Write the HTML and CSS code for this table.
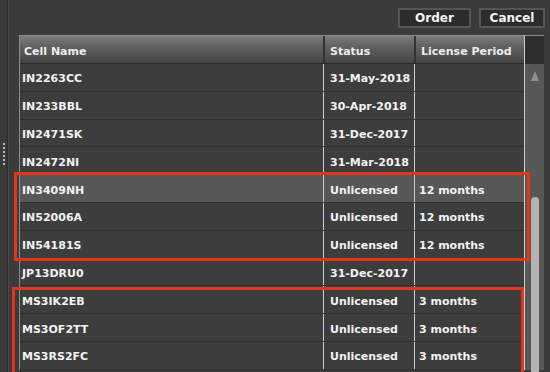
FILE: index.html
```html
<!DOCTYPE html>
<html lang="en">
<head>
  <meta charset="UTF-8" />
  <title>Cell Licenses</title>
  <meta name="viewport" content="width=device-width, initial-scale=1.0" />
  <link rel="stylesheet" href="styles.css">
</head>
<body>
  <div class="shell">
    <div class="splitter">
      <div class="grip">
        <span></span><span></span><span></span><span></span><span></span><span></span>
      </div>
    </div>

    <div class="panel">
      <div class="toolbar">
        <button class="btn btn-order">Order</button>
        <button class="btn btn-cancel">Cancel</button>
      </div>

      <div class="grid-wrap">
        <div class="cells">
          <div class="row head">
            <div class="c1">Cell Name</div>
            <div class="c2">Status</div>
            <div class="c3">License Period</div>
          </div>
          <div class="row"><div class="c1">IN2263CC</div><div class="c2">31-May-2018</div><div class="c3"></div></div>
          <div class="row"><div class="c1">IN233BBL</div><div class="c2">30-Apr-2018</div><div class="c3"></div></div>
          <div class="row"><div class="c1">IN2471SK</div><div class="c2">31-Dec-2017</div><div class="c3"></div></div>
          <div class="row"><div class="c1">IN2472NI</div><div class="c2">31-Mar-2018</div><div class="c3"></div></div>
          <div class="row selected"><div class="c1">IN3409NH</div><div class="c2">Unlicensed</div><div class="c3">12 months</div></div>
          <div class="row"><div class="c1">IN52006A</div><div class="c2">Unlicensed</div><div class="c3">12 months</div></div>
          <div class="row"><div class="c1">IN54181S</div><div class="c2">Unlicensed</div><div class="c3">12 months</div></div>
          <div class="row"><div class="c1">JP13DRU0</div><div class="c2">31-Dec-2017</div><div class="c3"></div></div>
          <div class="row"><div class="c1">MS3IK2EB</div><div class="c2">Unlicensed</div><div class="c3">3 months</div></div>
          <div class="row"><div class="c1">MS3OF2TT</div><div class="c2">Unlicensed</div><div class="c3">3 months</div></div>
          <div class="row"><div class="c1">MS3RS2FC</div><div class="c2">Unlicensed</div><div class="c3">3 months</div></div>
        </div>

        <div class="scrollbar">
          <div class="corner"></div>
          <div class="track">
            <div class="arrow"></div>
            <div class="thumb"></div>
          </div>
        </div>

        <!-- highlight frames drawn over the row groups -->
        <div class="mark mark-12"></div>
        <div class="mark mark-3"></div>
      </div>
    </div>
  </div>
</body>
</html>
```

FILE: styles.css
```css
html, body {
  margin: 0;
  height: 372px;
  overflow: hidden;
}

body {
  font-family: "DejaVu Sans", Verdana, sans-serif;
  font-weight: bold;
  font-size: 11px;
  background-color: #3b3b3b;
  color: #f2f2f2;
}

.shell {
  display: flex;
  height: 372px;
  overflow: hidden;
}

/* left splitter with its drag grip */
.splitter {
  width: 8px;
  border-right: 1px solid #2a2a2a;
  box-shadow: 1px 0 0 #4c4c4c;
  background: #393939;
  display: flex;
  justify-content: center;
  padding-top: 143px;
  box-sizing: border-box;
}

.grip {
  display: flex;
  flex-direction: column;
  gap: 2px;
}

.grip span {
  width: 2px;
  height: 2px;
  background: #b8b8b8;
}

.panel {
  flex: 1;
  padding-left: 11px;
}

.toolbar {
  height: 35px;
  display: flex;
  justify-content: flex-end;
  align-items: flex-start;
  gap: 8px;
  padding: 8px 5px 0 0;
  box-sizing: border-box;
}

.btn {
  height: 20px;
  padding: 0;
  font-family: "DejaVu Sans", Verdana, sans-serif;
  font-weight: bold;
  font-size: 12px;
  color: #f4f4f4;
  background: #2c2c2c;
  border: 2px solid #555;
  line-height: 15px;
}

.btn-order { width: 73px; }
.btn-cancel { width: 66px; }

.grid-wrap {
  position: relative;
  display: flex;
}

.cells {
  width: 506px;
  border: 1px solid #8c8c8c;
  border-right-color: #cfcfcf;
  border-bottom: none;
  box-sizing: border-box;
}

.row {
  display: grid;
  grid-template-columns: 303px 91px 1fr;
  height: 27.8px;
  box-sizing: border-box;
  border-bottom: 1px solid #303030;
  background: #3d3d3d;
}

.row > div {
  display: flex;
  align-items: center;
  padding-top: 3px;
  white-space: nowrap;
}

.row .c1 { padding-left: 2px; }
.row .c2 { padding-left: 6px; border-left: 1px solid #cdcdcd; }
.row .c3 { padding-left: 4px; border-left: 1px solid #cdcdcd; }

.row.selected {
  background: #575757;
}

.row.head {
  height: 28px;
  border-bottom: 1px solid #2a2a2a;
  background: linear-gradient(#7c7c7c, #5e5e5e 45%, #454545);
  color: #ececec;
}

.row.head .c1 { padding-left: 4px; }
.row.head .c2 { padding-left: 5px; border-left: 2px solid #333; }
.row.head .c3 { padding-left: 5px; border-left: 2px solid #333; }

/* vertical scrollbar */
.scrollbar {
  width: 19px;
  display: flex;
  flex-direction: column;
}

.corner {
  height: 28px;
  background: #2d2d2d;
  border-top: 1px solid #8c8c8c;
}

.track {
  flex: 1;
  background: #575757;
  position: relative;
}

.arrow {
  position: absolute;
  left: 6px;
  top: 7px;
  width: 0;
  height: 0;
  border-left: 4px solid transparent;
  border-right: 4px solid transparent;
  border-bottom: 10px solid #8e8e8e;
}

.thumb {
  position: absolute;
  left: 6px;
  top: 133px;
  width: 8px;
  height: 220px;
  border-radius: 4px 4px 0 0;
  background: #b4b4b4;
}

.mark {
  position: absolute;
  border: 3px solid #e0361c;
  box-sizing: border-box;
}

.mark-12 {
  left: -5px;
  top: 137px;
  width: 516px;
  height: 89px;
}

.mark-3 {
  left: -7px;
  top: 252px;
  width: 512px;
  height: 90px;
}
```
